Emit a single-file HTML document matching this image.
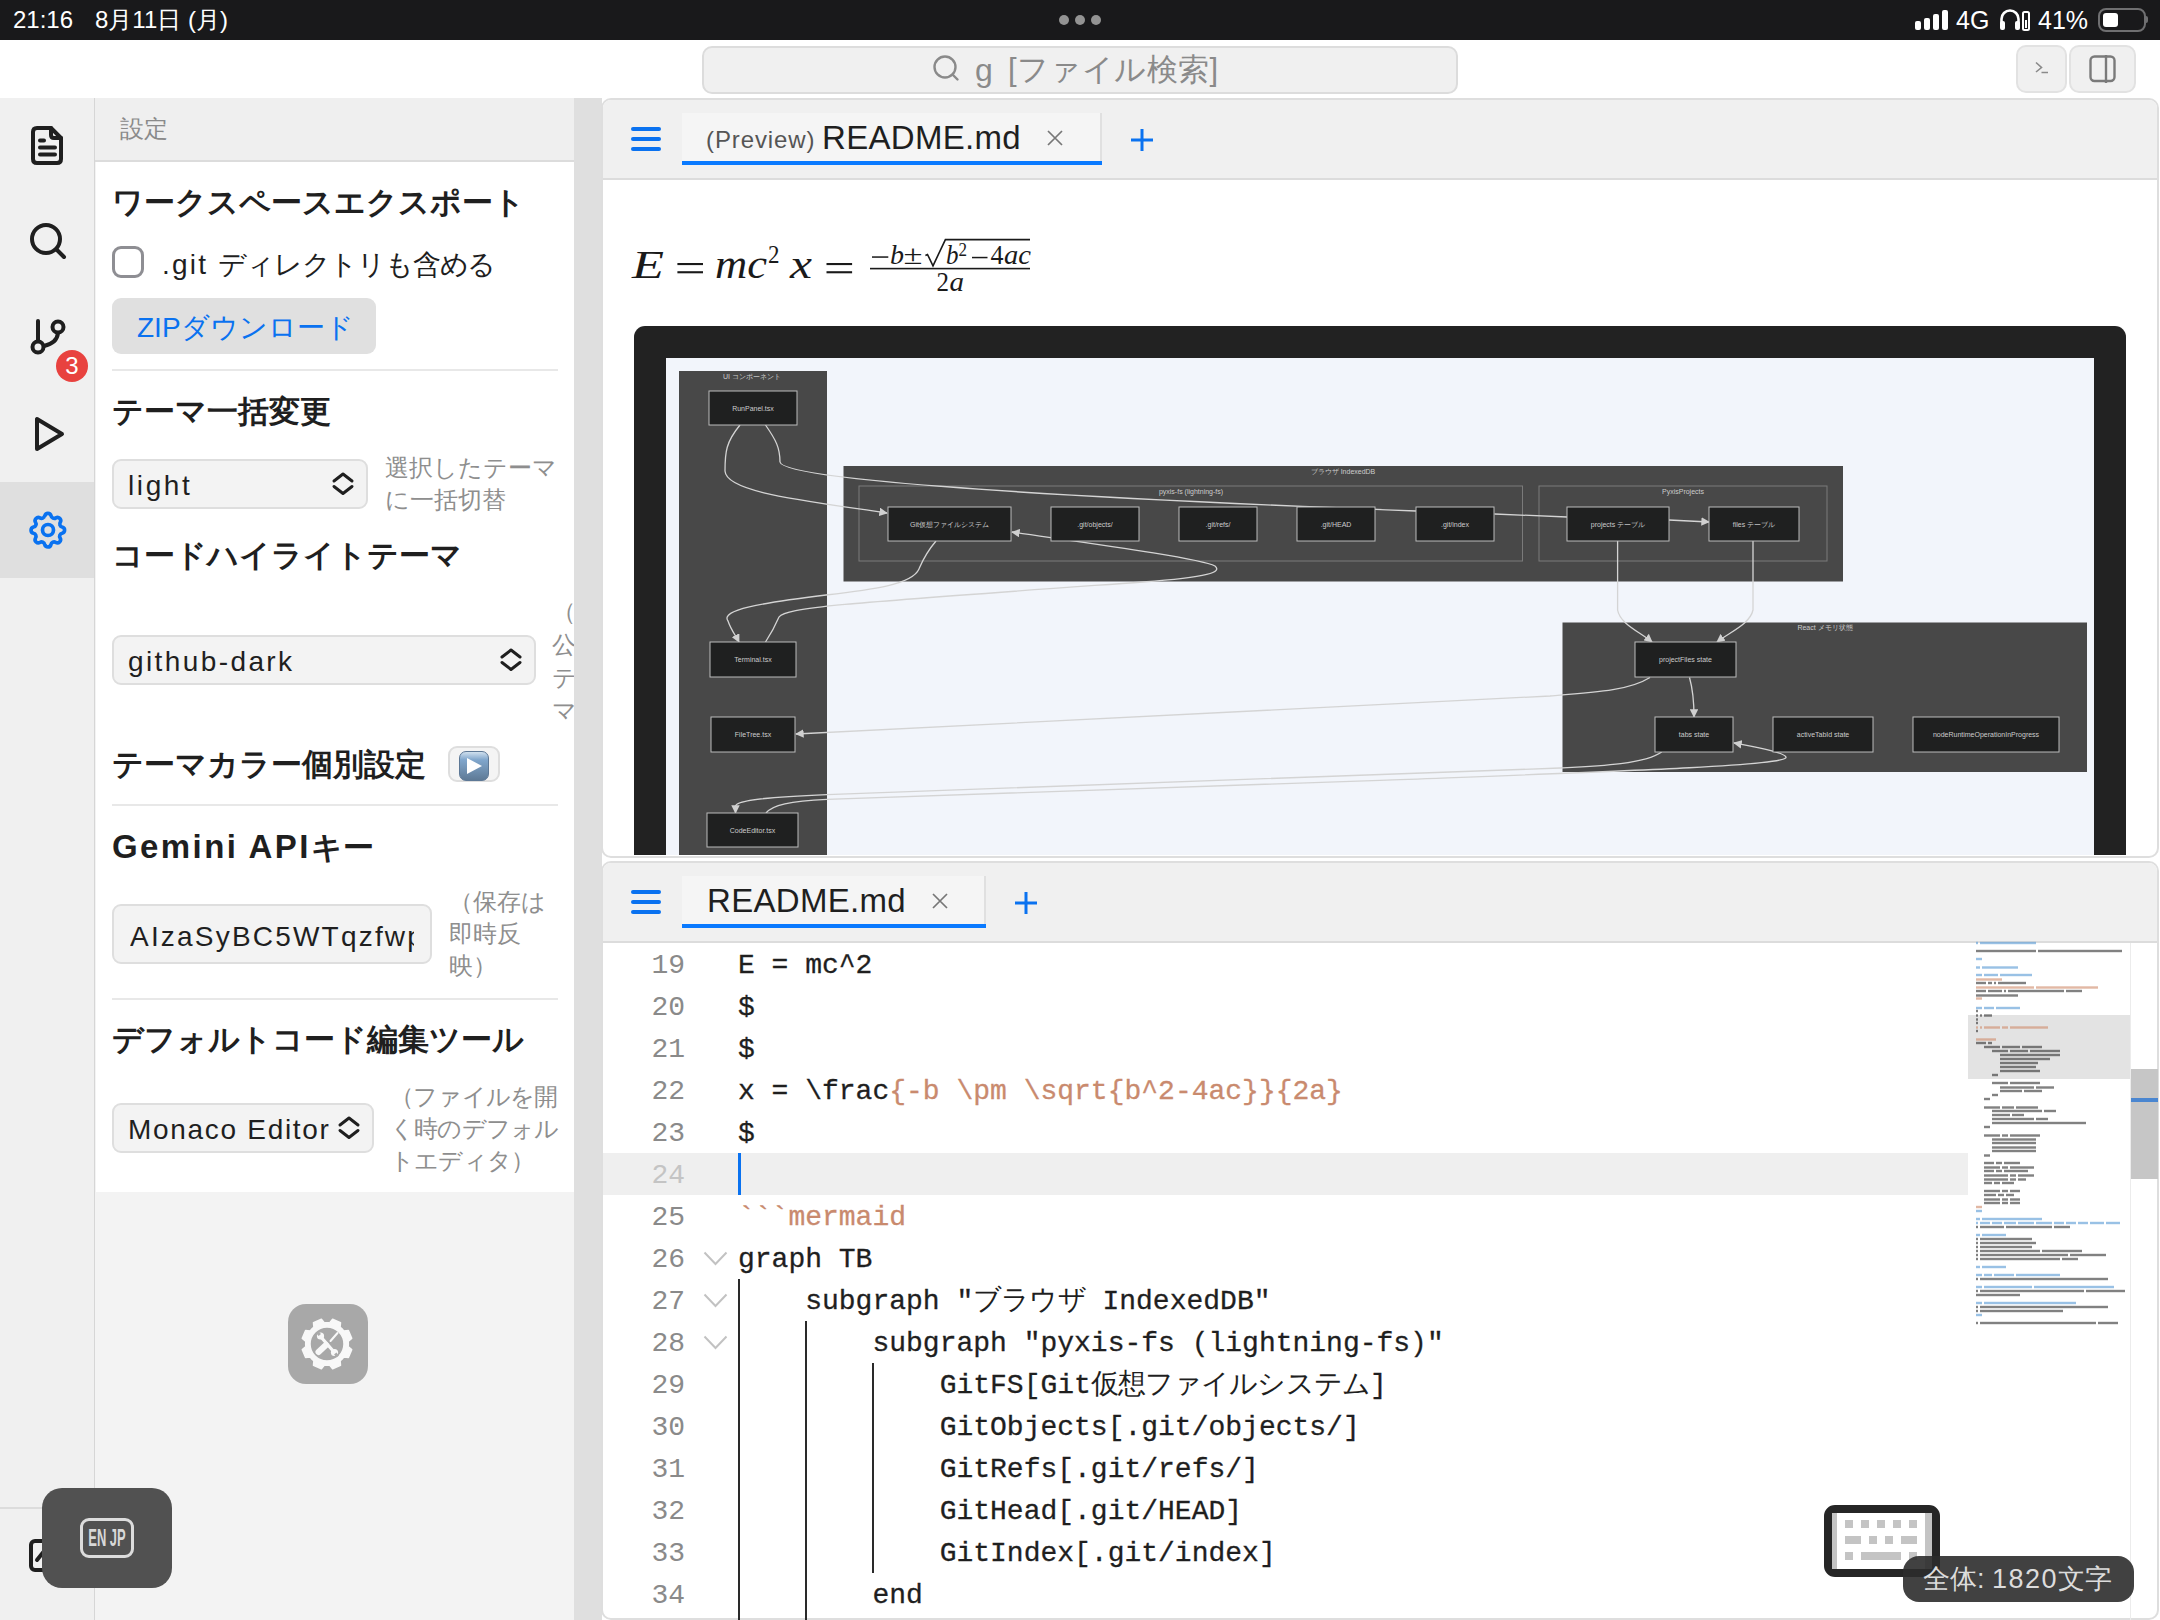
<!DOCTYPE html>
<html><head><meta charset="utf-8">
<style>
*{box-sizing:border-box;margin:0;padding:0}
html,body{width:2160px;height:1620px;overflow:hidden;background:#fff;font-family:"Liberation Sans",sans-serif;color:#1f1f1f}
.a{position:absolute}
#status{left:0;top:0;width:2160px;height:40px;background:#19191b;color:#fff}
#toolbar{left:0;top:40px;width:2160px;height:58px;background:#fff}
#act{left:0;top:98px;width:95px;height:1522px;background:#f0f0f0;border-right:1px solid #d6d6d6}
#side{left:95px;top:98px;width:479px;height:1522px;background:#f3f3f3}
#resz{left:574px;top:98px;width:28px;height:1522px;background:#dfdfdf}
.panel{left:601px;width:1558px;background:#fff;border:2px solid #dedede;border-radius:10px 10px 0 0;overflow:hidden}
.tabbar{left:0;top:0;width:100%;height:80px;background:#f0f0f0;border-bottom:2px solid #dcdcdc}
.ham{width:30px;height:4px;background:#0a72f0;border-radius:2px}
.h{font-weight:bold;font-size:31px;color:#1f1f1f;white-space:nowrap}
.sel{background:#f3f3f3;border:2px solid #dedede;border-radius:9px}
.gray{color:#8e8e8e;font-size:24px;line-height:32px;white-space:nowrap}
.hr{height:2px;background:#e8e8e8}
.mono{font-family:"Liberation Mono",monospace}
.ln{left:0;width:84px;text-align:right;color:#8a8a8a;font-size:28px;height:42px;line-height:42px}
.cl{left:738px;font-size:28px;height:42px;line-height:42px;white-space:pre;color:#1f1f1f;-webkit-text-stroke:0.3px currentColor}
.str{color:#c98a6e}
</style></head><body>
<!-- status bar -->
<div id="status" class="a">
  <div class="a" style="left:13px;top:4px;font-size:24px;line-height:32px;white-space:nowrap">21:16</div><div class="a" style="left:95px;top:4px;font-size:24px;line-height:32px;white-space:nowrap">8月11日 (月)</div>
  <div class="a" style="left:1059px;top:15px;width:10px;height:10px;border-radius:5px;background:#939393"></div>
  <div class="a" style="left:1075px;top:15px;width:10px;height:10px;border-radius:5px;background:#939393"></div>
  <div class="a" style="left:1091px;top:15px;width:10px;height:10px;border-radius:5px;background:#939393"></div>
  <div class="a" style="left:1914px;top:10px;width:40px;height:24px">
    <div class="a" style="left:1px;top:11px;width:6px;height:9px;background:#fff;border-radius:2px"></div>
    <div class="a" style="left:10px;top:8px;width:6px;height:12px;background:#fff;border-radius:2px"></div>
    <div class="a" style="left:19px;top:4px;width:6px;height:16px;background:#fff;border-radius:2px"></div>
    <div class="a" style="left:28px;top:0px;width:6px;height:20px;background:#fff;border-radius:2px"></div>
  </div>
  <div class="a" style="left:1956px;top:4px;font-size:25px;line-height:32px;white-space:nowrap">4G</div>
  <div class="a" style="left:2038px;top:4px;font-size:25px;line-height:32px;white-space:nowrap">41%</div>
  <div class="a" style="left:2098px;top:8px;width:48px;height:24px;border:2px solid #6f6f71;border-radius:8px">
    <div class="a" style="left:3px;top:3px;width:15px;height:14px;background:#fff;border-radius:3px"></div>
  </div>
</div>
<!-- toolbar -->
<div id="toolbar" class="a">
  <div class="a" style="left:702px;top:6px;width:756px;height:48px;background:#f0f0f0;border:2px solid #dcdcdc;border-radius:10px"></div>
  <div class="a" style="left:975px;top:8px;font-size:32px;line-height:44px;color:#8a8a8a;white-space:nowrap">g</div><div class="a" style="left:1008px;top:8px;font-size:31px;line-height:44px;color:#8a8a8a;white-space:nowrap;letter-spacing:0.4px">[ファイル検索]</div>
  <div class="a" style="left:2016px;top:5px;width:51px;height:48px;background:#f0f0f0;border:2px solid #e2e2e2;border-radius:10px"></div>
  <div class="a" style="left:2069px;top:5px;width:67px;height:48px;background:#f0f0f0;border:2px solid #e2e2e2;border-radius:10px"></div>
</div>
<!-- activity bar -->
<div id="act" class="a">
  <div class="a" style="left:0;top:384px;width:94px;height:96px;background:#dfdfdf"></div>
  <div class="a" style="left:0;top:1409px;width:94px;height:2px;background:#dcdcdc"></div>
</div>
<!-- sidebar -->
<div id="side" class="a">
  <div class="a" style="left:0;top:0;width:479px;height:64px;background:#efefef;border-bottom:2px solid #dcdcdc"></div>
  <div class="a" style="left:25px;top:14px;font-size:24px;line-height:34px;color:#8a8a8a">設定</div>
  <div class="a" style="left:1px;top:64px;width:478px;height:1030px;background:#fff"></div>
</div>


<!-- activity icons -->
<svg class="a" style="left:0;top:98px" width="95" height="500" viewBox="0 98 95 500" fill="none" stroke="#1f1f1f" stroke-width="4" stroke-linecap="round" stroke-linejoin="round">
  <path d="M37,128 H51 L61,138 V159 Q61,163 57,163 H37 Q33,163 33,159 V132 Q33,128 37,128 Z"/>
  <path d="M51,128 V135 Q51,138 54,138 H61"/>
  <path d="M40,140.5 H44 M40,147.5 H55 M40,154.5 H55"/>
  <circle cx="46" cy="239" r="14"/>
  <path d="M56.5,249.5 L64,257"/>
  <path d="M38,321 V341"/>
  <circle cx="38" cy="347" r="5.5"/>
  <circle cx="58" cy="327" r="5.5"/>
  <path d="M44,346 Q57,343 58,333"/>
  <path d="M37,419 V449 L62,434 Z"/>
</svg>
<div class="a" style="left:56px;top:350px;width:32px;height:32px;border-radius:16px;background:#e8423f;color:#fff;font-size:24px;line-height:32px;text-align:center">3</div>
<svg class="a" style="left:26px;top:508px" width="44" height="44" viewBox="0 0 24 24" fill="none" stroke="#0a72f0" stroke-width="2" stroke-linecap="round" stroke-linejoin="round">
  <path d="M10.3 4.3c.4-1.8 2.9-1.8 3.4 0a1.7 1.7 0 0 0 2.6 1.1c1.5-.9 3.3.8 2.4 2.4a1.7 1.7 0 0 0 1 2.6c1.8.4 1.8 2.900 0 3.400a1.7 1.7 0 0 0-1.1 2.6c.9 1.5-.8 3.300-2.400 2.400a1.7 1.7 0 0 0-2.600 1.100c-.4 1.800-2.900 1.800-3.400 0a1.7 1.7 0 0 0-2.600-1.100c-1.500.900-3.300-.800-2.400-2.400a1.7 1.7 0 0 0-1.100-2.600c-1.800-.400-1.800-2.900 0-3.400a1.7 1.7 0 0 0 1.100-2.600c-.900-1.500.800-3.300 2.400-2.400 1 .6 2.300.1 2.600-1.100z"/>
  <circle cx="12" cy="12" r="3"/>
</svg>
<!-- sidebar content -->
<div class="a h" style="left:112px;top:181px;line-height:44px">ワークスペースエクスポート</div>
<div class="a" style="left:112px;top:246px;width:31.5px;height:31.5px;border:3px solid #8e8e93;border-radius:9px;background:#fff"></div>
<div class="a" style="left:162px;top:245px;font-size:28px;line-height:40px;white-space:nowrap"><span style="letter-spacing:2.2px">.git </span><span style="letter-spacing:-1.2px">ディレクトリも含める</span></div>
<div class="a" style="left:112px;top:298px;width:264px;height:56px;background:#e0e0e0;border-radius:9px"></div>
<div class="a" style="left:137px;top:308px;font-size:28px;line-height:40px;color:#0a72f0;white-space:nowrap">ZIPダウンロード</div>
<div class="a hr" style="left:112px;top:369px;width:446px"></div>
<div class="a h" style="left:112px;top:390px;line-height:44px">テーマ一括変更</div>
<div class="a sel" style="left:112px;top:459px;width:256px;height:50px"></div>
<div class="a" style="left:128px;top:466px;font-size:28px;line-height:40px;white-space:nowrap;letter-spacing:2.6px">light</div>
<div class="a gray" style="left:385px;top:452px;width:180px">選択したテーマ<br>に一括切替</div>
<div class="a h" style="left:112px;top:534px;line-height:44px">コードハイライトテーマ</div>
<div class="a sel" style="left:112px;top:635px;width:424px;height:50px"></div>
<div class="a" style="left:128px;top:642px;font-size:28px;line-height:40px;white-space:nowrap;letter-spacing:2.4px">github-dark</div>
<div class="a gray" style="left:552px;top:595px;width:40px;line-height:33px">（<br>公<br>テ<br>マ</div>
<div class="a h" style="left:112px;top:743px;line-height:44px">テーマカラー個別設定</div>
<div class="a" style="left:448px;top:746px;width:52px;height:36px;background:#f4f4f4;border:2px solid #dedede;border-radius:9px"></div>
<div class="a" style="left:459px;top:751px;width:30px;height:30px;border-radius:7px;border:1px solid #5d7896;background:linear-gradient(#d0e0ee 0%,#80a6cc 28%,#7496b8 55%,#5e7a96 100%)"></div>
<div class="a" style="left:467px;top:758px;width:0;height:0;border-left:15px solid #fff;border-top:8px solid transparent;border-bottom:8px solid transparent"></div>
<div class="a hr" style="left:112px;top:804px;width:446px"></div>
<div class="a h" style="left:112px;top:825px;line-height:44px"><span style="letter-spacing:2.4px;font-size:33px">Gemini API</span>キー</div>
<div class="a sel" style="left:112px;top:904px;width:320px;height:60px;overflow:hidden">
  <div class="a" style="left:16px;top:11px;font-size:28px;line-height:40px;white-space:nowrap;width:284px;overflow:hidden;letter-spacing:2.2px">AIzaSyBC5WTqzfwpe</div>
</div>
<div class="a gray" style="left:449px;top:886px;width:110px">（保存は<br>即時反<br>映）</div>
<div class="a hr" style="left:112px;top:998px;width:446px"></div>
<div class="a h" style="left:112px;top:1018px;line-height:44px">デフォルトコード編集ツール</div>
<div class="a sel" style="left:112px;top:1103px;width:262px;height:50px"></div>
<div class="a" style="left:128px;top:1110px;font-size:28px;line-height:40px;white-space:nowrap;letter-spacing:1.7px">Monaco Editor</div>
<div class="a gray" style="left:390px;top:1081px;width:175px;letter-spacing:-0.8px">（ファイルを開<br>く時のデフォル<br>トエディタ）</div>
<div class="a" style="left:288px;top:1304px;width:80px;height:80px;background:#a8a8a8;border-radius:18px"></div>

<!-- selects chevrons -->
<svg class="a" style="left:0;top:0" width="600" height="1200" viewBox="0 0 600 1200" fill="none" stroke="#1f1f1f" stroke-width="3" stroke-linecap="round" stroke-linejoin="round">
  <path d="M334,481 L343,474 L352,481 M334,486.5 L343,493.5 L352,486.5"/>
  <path d="M502,657 L511,650 L520,657 M502,662.5 L511,669.5 L520,662.5"/>
  <path d="M340,1125 L349,1118 L358,1125 M340,1130.5 L349,1137.5 L358,1130.5"/>
</svg>
<!-- gear app icon -->
<svg class="a" style="left:0;top:1250px" width="600" height="200" viewBox="0 1250 600 200">
  <path fill="#f8f8f8" fill-rule="evenodd" stroke="#f8f8f8" stroke-width="1.5" stroke-linejoin="round" d="M348.1,1346.6 L351.7,1349.6 L348.4,1357.5 L343.8,1357.1 L343.0,1358.1 L342.1,1359.1 L341.1,1360.0 L340.1,1360.8 L340.5,1365.4 L332.6,1368.7 L329.6,1365.1 L328.3,1365.3 L327.0,1365.3 L325.7,1365.3 L324.4,1365.1 L321.4,1368.7 L313.5,1365.4 L313.9,1360.8 L312.9,1360.0 L311.9,1359.1 L311.0,1358.1 L310.2,1357.1 L305.6,1357.5 L302.3,1349.6 L305.9,1346.6 L305.7,1345.3 L305.7,1344.0 L305.7,1342.7 L305.9,1341.4 L302.3,1338.4 L305.6,1330.5 L310.2,1330.9 L311.0,1329.9 L311.9,1328.9 L312.9,1328.0 L313.9,1327.2 L313.5,1322.6 L321.4,1319.3 L324.4,1322.9 L325.7,1322.7 L327.0,1322.7 L328.3,1322.7 L329.6,1322.9 L332.6,1319.3 L340.5,1322.6 L340.1,1327.2 L341.1,1328.0 L342.1,1328.9 L343.0,1329.9 L343.8,1330.9 L348.4,1330.5 L351.7,1338.4 L348.1,1341.4 L348.3,1342.7 L348.3,1344.0 L348.3,1345.3 Z M344,1344 A17,17 0 1,0 310,1344 A17,17 0 1,0 344,1344 Z"/>
  <g stroke="#f8f8f8" stroke-linecap="round" fill="none">
    <path d="M337.5,1333 L330.5,1341" stroke-width="2"/>
    <path d="M326,1345 L318.5,1352" stroke-width="6"/>
    <path d="M321,1337 L334,1352" stroke-width="3.2"/>
  </g>
  <g fill="#f8f8f8"><circle cx="320.5" cy="1336" r="3.6"/><circle cx="334.5" cy="1352.5" r="3.6"/></g>
  <g fill="#ababab"><rect x="317" y="1331.5" width="3" height="4" transform="rotate(-40 318.5 1333.5)"/><rect x="335" y="1353" width="3" height="4" transform="rotate(-40 336.5 1355)"/></g>
</svg>
<!-- edit icon partly hidden -->
<svg class="a" style="left:20px;top:1530px" width="40" height="50" viewBox="20 1530 40 50" fill="none" stroke="#1f1f1f" stroke-width="4" stroke-linecap="round"><rect x="31" y="1541" width="26" height="29" rx="4"/><path d="M37,1560 L45,1550"/></svg>
<div class="a" style="left:42px;top:1488px;width:130px;height:100px;background:#515151;border-radius:20px"></div>
<div class="a" style="left:80px;top:1518px;width:54px;height:40px;border:3px solid #dcdcdc;border-radius:9px"></div><div class="a" style="left:57px;top:1520px;width:100px;height:36px;color:#d8d8d8;font-weight:bold;font-size:24px;line-height:36px;text-align:center;transform:scaleX(0.54);white-space:nowrap">EN JP</div>
<div id="resz" class="a"></div>
<!-- top panel -->
<div class="a panel" style="top:98px;height:760px;border-radius:10px">
  <div class="a tabbar"></div>
</div>
<!-- bottom panel -->
<div class="a panel" style="top:861px;height:759px;border-radius:10px">
  <div class="a tabbar"></div>
</div>


<!-- mermaid -->
<div class="a" style="left:603px;top:181px;width:1554px;height:674px;overflow:hidden">
<svg class="a" style="left:-603px;top:-181px" width="2160" height="1620" viewBox="0 0 2160 1620">
<defs><marker id="ar" viewBox="0 0 10 10" refX="9" refY="5" markerWidth="8.5" markerHeight="8.5" markerUnits="userSpaceOnUse" orient="auto"><path d="M0,0 L10,5 L0,10 z" fill="#d0d0d0"/></marker></defs>
<rect x="634" y="326" width="1492" height="700" rx="11" fill="#222222"/>
<rect x="666" y="358" width="1428" height="700" fill="#f2f5fb"/>
<g fill="#484848">
<rect x="679" y="371" width="148" height="600"/>
<rect x="843.5" y="466" width="999.5" height="115.5"/>
<rect x="1562.5" y="622.5" width="524.5" height="149.5"/>
</g>
<g fill="none" stroke="#7a7a7a" stroke-width="1"><rect x="859" y="486" width="663.5" height="75"/><rect x="1539" y="486" width="288" height="75"/></g>
<g fill="none" stroke="#d4d4d4" stroke-width="1.3">
<path d="M740,425 C726,442 725,452 725,471 C726,492 800,500 887,513" marker-end="url(#ar)"/>
<path d="M765.5,425 C776,440 780,448 780,462 C783,478 1000,495 1416,511 M1494.5,514 L1567,517"/>
<path d="M1669,520 L1709,522" marker-end="url(#ar)"/>
<path d="M936,541 C925,554 922,562 919,569 C912,585 870,590 826,595 C760,603 720,610 728,621 C731,630 736,636 739,642" marker-end="url(#ar)"/>
<path d="M765.5,642 C772,632 776,624 779,617 C786,607 850,603 1143,582 C1210,577 1222,572 1215,566 C1200,558 1080,542 1012,532" marker-end="url(#ar)"/>
<path d="M1617.6,541 V610 C1620,624 1640,632 1652,642" marker-end="url(#ar)"/>
<path d="M1753,541 V610 C1750,624 1730,632 1717,642" marker-end="url(#ar)"/>
<path d="M1650,677.5 C1630,690 1600,692 1550,696 L796,734" marker-end="url(#ar)"/>
<path d="M1689.5,677.5 C1693,690 1694,705 1694,717" marker-end="url(#ar)"/>
<path d="M1661.7,752 C1645,764 1600,766 1560,768 L827,794.6 C770,797 737,800 735.5,806 L735.5,813" marker-end="url(#ar)"/>
<path d="M766,813 C772,805 790,801 827,799.3 L1380,780.3 C1600,772 1790,766 1786,757 C1783,752 1760,748 1734,743" marker-end="url(#ar)"/>
</g>
<g font-family="Liberation Sans,sans-serif" font-size="7" fill="#cccccc" text-anchor="middle">
<text x="752" y="379">UI コンポーネント</text>
<text x="1343" y="474">ブラウザ IndexedDB</text>
<text x="1191" y="494">pyxis-fs (lightning-fs)</text>
<text x="1683" y="494">PyxisProjects</text>
<text x="1825" y="630">React メモリ状態</text>
<rect x="709" y="391" width="88" height="34" fill="#1f2020" stroke="#bbbbbb" stroke-width="1"/><text x="753.0" y="410.5">RunPanel.tsx</text>
<rect x="710" y="642" width="86" height="35" fill="#1f2020" stroke="#bbbbbb" stroke-width="1"/><text x="753.0" y="662.0">Terminal.tsx</text>
<rect x="711" y="717" width="84" height="35" fill="#1f2020" stroke="#bbbbbb" stroke-width="1"/><text x="753.0" y="737.0">FileTree.tsx</text>
<rect x="707" y="813" width="91" height="34" fill="#1f2020" stroke="#bbbbbb" stroke-width="1"/><text x="752.5" y="832.5">CodeEditor.tsx</text>
<rect x="888" y="507" width="123" height="34" fill="#1f2020" stroke="#bbbbbb" stroke-width="1"/><text x="949.5" y="526.5">Git仮想ファイルシステム</text>
<rect x="1051" y="507" width="88" height="34" fill="#1f2020" stroke="#bbbbbb" stroke-width="1"/><text x="1095.0" y="526.5">.git/objects/</text>
<rect x="1179" y="507" width="78" height="34" fill="#1f2020" stroke="#bbbbbb" stroke-width="1"/><text x="1218.0" y="526.5">.git/refs/</text>
<rect x="1297" y="507" width="78" height="34" fill="#1f2020" stroke="#bbbbbb" stroke-width="1"/><text x="1336.0" y="526.5">.git/HEAD</text>
<rect x="1416" y="507" width="78" height="34" fill="#1f2020" stroke="#bbbbbb" stroke-width="1"/><text x="1455.0" y="526.5">.git/index</text>
<rect x="1567" y="507" width="102" height="34" fill="#1f2020" stroke="#bbbbbb" stroke-width="1"/><text x="1618.0" y="526.5">projects テーブル</text>
<rect x="1709" y="507" width="90" height="34" fill="#1f2020" stroke="#bbbbbb" stroke-width="1"/><text x="1754.0" y="526.5">files テーブル</text>
<rect x="1635" y="642" width="101" height="35" fill="#1f2020" stroke="#bbbbbb" stroke-width="1"/><text x="1685.5" y="662.0">projectFiles state</text>
<rect x="1655" y="717" width="78" height="35" fill="#1f2020" stroke="#bbbbbb" stroke-width="1"/><text x="1694.0" y="737.0">tabs state</text>
<rect x="1773" y="717" width="100" height="35" fill="#1f2020" stroke="#bbbbbb" stroke-width="1"/><text x="1823.0" y="737.0">activeTabId state</text>
<rect x="1913" y="717" width="146" height="35" fill="#1f2020" stroke="#bbbbbb" stroke-width="1"/><text x="1986.0" y="737.0">nodeRuntimeOperationInProgress</text>
</g></svg></div>
<!-- math -->
<svg class="a" style="left:600px;top:220px" width="460" height="90" viewBox="600 220 460 90" font-family="Liberation Serif,serif" fill="#1a1a1a">
  <text x="632" y="278" font-size="41" font-style="italic" textLength="32" lengthAdjust="spacingAndGlyphs">E</text>
  <rect x="677.4" y="263" width="25.6" height="2.1"/><rect x="677.4" y="271.2" width="25.6" height="2.1"/>
  <text x="715" y="278" font-size="41" font-style="italic" textLength="52" lengthAdjust="spacingAndGlyphs">mc</text>
  <text x="768" y="263" font-size="25" textLength="11.5" lengthAdjust="spacingAndGlyphs">2</text>
  <text x="790" y="278" font-size="41" font-style="italic" textLength="22" lengthAdjust="spacingAndGlyphs">x</text>
  <rect x="826.5" y="263" width="25.6" height="2.1"/><rect x="826.5" y="271.2" width="25.6" height="2.1"/>
  <rect x="872" y="256.3" width="16.3" height="1.5"/>
  <text x="890" y="264.2" font-size="28" font-style="italic" textLength="14" lengthAdjust="spacingAndGlyphs">b</text>
  <text x="903.5" y="263.5" font-size="28" textLength="19" lengthAdjust="spacingAndGlyphs">±</text>
  <path d="M925.4,255.5 L927.5,254.5 L933,265.8 L945.4,239.6 H1030" fill="none" stroke="#1a1a1a" stroke-width="1.6" stroke-linejoin="miter"/>
  <text x="946" y="264.2" font-size="28" font-style="italic" textLength="12.5" lengthAdjust="spacingAndGlyphs">b</text>
  <text x="958.5" y="256" font-size="18" textLength="8.5" lengthAdjust="spacingAndGlyphs">2</text>
  <rect x="972" y="256.8" width="15.5" height="1.5"/>
  <text x="990.5" y="264.2" font-size="28" textLength="13" lengthAdjust="spacingAndGlyphs">4</text>
  <text x="1004" y="264.2" font-size="28" font-style="italic" textLength="27" lengthAdjust="spacingAndGlyphs">ac</text>
  <rect x="870" y="267.8" width="160" height="1.6"/>
  <text x="936.5" y="291.3" font-size="28" textLength="12.5" lengthAdjust="spacingAndGlyphs">2</text>
  <text x="949.5" y="291.3" font-size="28" font-style="italic" textLength="14.5" lengthAdjust="spacingAndGlyphs">a</text>
</svg>
<!-- editor -->
<div class="a" style="left:603px;top:1153px;width:1365px;height:42px;background:#efefef"></div>
<div class="a" style="left:738px;top:1153px;width:3px;height:42px;background:#0a72f0"></div>
<div class="a mono ln" style="left:601px;top:945px;color:#8a8a8a">19</div>
<div class="a mono cl" style="top:945px">E = mc^2</div>
<div class="a mono ln" style="left:601px;top:987px;color:#8a8a8a">20</div>
<div class="a mono cl" style="top:987px">$</div>
<div class="a mono ln" style="left:601px;top:1029px;color:#8a8a8a">21</div>
<div class="a mono cl" style="top:1029px">$</div>
<div class="a mono ln" style="left:601px;top:1071px;color:#8a8a8a">22</div>
<div class="a mono cl" style="top:1071px">x = \frac<span class="str">{-b \pm \sqrt{b^2-4ac}}{2a}</span></div>
<div class="a mono ln" style="left:601px;top:1113px;color:#8a8a8a">23</div>
<div class="a mono cl" style="top:1113px">$</div>
<div class="a mono ln" style="left:601px;top:1155px;color:#c4c4c4">24</div>
<div class="a mono ln" style="left:601px;top:1197px;color:#8a8a8a">25</div>
<div class="a mono cl" style="top:1197px"><span class="str">```mermaid</span></div>
<div class="a mono ln" style="left:601px;top:1239px;color:#8a8a8a">26</div>
<div class="a mono cl" style="top:1239px">graph TB</div>
<svg class="a" style="left:702px;top:1250px" width="28" height="18" viewBox="0 0 28 18" fill="none" stroke="#c2c2c2" stroke-width="2"><path d="M2.5,2.5 L13.5,14 L24.5,2.5"/></svg>
<div class="a mono ln" style="left:601px;top:1281px;color:#8a8a8a">27</div>
<div class="a mono cl" style="top:1281px">    subgraph "<span style="letter-spacing:-0.9px;-webkit-text-stroke:0">ブラウザ</span> IndexedDB"</div>
<svg class="a" style="left:702px;top:1292px" width="28" height="18" viewBox="0 0 28 18" fill="none" stroke="#c2c2c2" stroke-width="2"><path d="M2.5,2.5 L13.5,14 L24.5,2.5"/></svg>
<div class="a mono ln" style="left:601px;top:1323px;color:#8a8a8a">28</div>
<div class="a mono cl" style="top:1323px">        subgraph "pyxis-fs (lightning-fs)"</div>
<svg class="a" style="left:702px;top:1334px" width="28" height="18" viewBox="0 0 28 18" fill="none" stroke="#c2c2c2" stroke-width="2"><path d="M2.5,2.5 L13.5,14 L24.5,2.5"/></svg>
<div class="a mono ln" style="left:601px;top:1365px;color:#8a8a8a">29</div>
<div class="a mono cl" style="top:1365px">            GitFS[Git<span style="letter-spacing:-0.9px;-webkit-text-stroke:0">仮想ファイルシステム</span>]</div>
<div class="a mono ln" style="left:601px;top:1407px;color:#8a8a8a">30</div>
<div class="a mono cl" style="top:1407px">            GitObjects[.git/objects/]</div>
<div class="a mono ln" style="left:601px;top:1449px;color:#8a8a8a">31</div>
<div class="a mono cl" style="top:1449px">            GitRefs[.git/refs/]</div>
<div class="a mono ln" style="left:601px;top:1491px;color:#8a8a8a">32</div>
<div class="a mono cl" style="top:1491px">            GitHead[.git/HEAD]</div>
<div class="a mono ln" style="left:601px;top:1533px;color:#8a8a8a">33</div>
<div class="a mono cl" style="top:1533px">            GitIndex[.git/index]</div>
<div class="a mono ln" style="left:601px;top:1575px;color:#8a8a8a">34</div>
<div class="a mono cl" style="top:1575px">        end</div>
<div class="a mono ln" style="left:601px;top:1617px;color:#8a8a8a">35</div>
<div class="a" style="left:738px;top:1279px;width:2px;height:341px;background:#2a2a2a"></div>
<div class="a" style="left:805px;top:1321px;width:2px;height:299px;background:#2a2a2a"></div>
<div class="a" style="left:872px;top:1363px;width:2px;height:210px;background:#2a2a2a"></div>
<!-- minimap -->
<div class="a" style="left:1968px;top:1015px;width:162px;height:64px;background:#e3e3e3"></div>
<div class="a" style="left:2130px;top:943px;width:1px;height:677px;background:#ececec"></div>
<div class="a" style="left:2131px;top:1069px;width:27px;height:110px;background:#c6c6c6"></div>
<div class="a" style="left:2131px;top:1098px;width:27px;height:4px;background:#4a86d0"></div>
<svg class="a" style="left:1960px;top:940px" width="200" height="400" viewBox="1960 940 200 400">
<rect x="1976" y="941.8" width="2" height="2.4" fill="#5b9bd5" opacity="0.62"/>
<rect x="1980" y="941.8" width="56" height="2.4" fill="#5b9bd5" opacity="0.62"/>
<rect x="1976" y="949.8" width="60" height="2.4" fill="#333" opacity="0.62"/>
<rect x="2038" y="949.8" width="84" height="2.4" fill="#333" opacity="0.62"/>
<rect x="1976" y="957.8" width="6" height="2.4" fill="#5b9bd5" opacity="0.62"/>
<rect x="1976" y="966.3" width="4" height="2.4" fill="#5b9bd5" opacity="0.62"/>
<rect x="1982" y="966.3" width="36" height="2.4" fill="#5b9bd5" opacity="0.62"/>
<rect x="1976" y="973.8" width="6" height="2.4" fill="#5b9bd5" opacity="0.62"/>
<rect x="1984" y="973.8" width="14" height="2.4" fill="#5b9bd5" opacity="0.62"/>
<rect x="2000" y="973.8" width="32" height="2.4" fill="#5b9bd5" opacity="0.62"/>
<rect x="1976" y="978.3" width="26" height="2.4" fill="#d08c6c" opacity="0.62"/>
<rect x="1976" y="981.8" width="10" height="2.4" fill="#333" opacity="0.62"/>
<rect x="1988" y="981.8" width="4" height="2.4" fill="#333" opacity="0.62"/>
<rect x="1994" y="981.8" width="2" height="2.4" fill="#333" opacity="0.62"/>
<rect x="1998" y="981.8" width="28" height="2.4" fill="#333" opacity="0.62"/>
<rect x="1976" y="986.3" width="58" height="2.4" fill="#d08c6c" opacity="0.62"/>
<rect x="2036" y="986.3" width="62" height="2.4" fill="#d08c6c" opacity="0.62"/>
<rect x="1976" y="989.8" width="10" height="2.4" fill="#333" opacity="0.62"/>
<rect x="1988" y="989.8" width="14" height="2.4" fill="#333" opacity="0.62"/>
<rect x="2004" y="989.8" width="2" height="2.4" fill="#333" opacity="0.62"/>
<rect x="2008" y="989.8" width="56" height="2.4" fill="#333" opacity="0.62"/>
<rect x="2066" y="989.8" width="16" height="2.4" fill="#333" opacity="0.62"/>
<rect x="1976" y="994.3" width="42" height="2.4" fill="#333" opacity="0.62"/>
<rect x="1976" y="997.3" width="6" height="2.4" fill="#d08c6c" opacity="0.62"/>
<rect x="1976" y="1006.8" width="6" height="2.4" fill="#5b9bd5" opacity="0.62"/>
<rect x="1984" y="1006.8" width="10" height="2.4" fill="#5b9bd5" opacity="0.62"/>
<rect x="1996" y="1006.8" width="24" height="2.4" fill="#5b9bd5" opacity="0.62"/>
<rect x="1976" y="1009.8" width="2" height="2.4" fill="#333" opacity="0.62"/>
<rect x="1976" y="1014.3" width="2" height="2.4" fill="#333" opacity="0.62"/>
<rect x="1980" y="1014.3" width="2" height="2.4" fill="#333" opacity="0.62"/>
<rect x="1984" y="1014.3" width="8" height="2.4" fill="#333" opacity="0.62"/>
<rect x="1976" y="1018.3" width="2" height="2.4" fill="#333" opacity="0.62"/>
<rect x="1976" y="1021.8" width="2" height="2.4" fill="#333" opacity="0.62"/>
<rect x="1976" y="1026.3" width="2" height="2.4" fill="#d08c6c" opacity="0.62"/>
<rect x="1980" y="1026.3" width="2" height="2.4" fill="#d08c6c" opacity="0.62"/>
<rect x="1984" y="1026.3" width="16" height="2.4" fill="#d08c6c" opacity="0.62"/>
<rect x="2002" y="1026.3" width="6" height="2.4" fill="#d08c6c" opacity="0.62"/>
<rect x="2010" y="1026.3" width="38" height="2.4" fill="#d08c6c" opacity="0.62"/>
<rect x="1976" y="1029.8" width="2" height="2.4" fill="#333" opacity="0.62"/>
<rect x="1976" y="1038.3" width="20" height="2.4" fill="#d08c6c" opacity="0.62"/>
<rect x="1976" y="1041.8" width="10" height="2.4" fill="#333" opacity="0.62"/>
<rect x="1988" y="1041.8" width="4" height="2.4" fill="#333" opacity="0.62"/>
<rect x="1984" y="1045.8" width="16" height="2.4" fill="#333" opacity="0.62"/>
<rect x="2002" y="1045.8" width="18" height="2.4" fill="#333" opacity="0.62"/>
<rect x="2022" y="1045.8" width="20" height="2.4" fill="#333" opacity="0.62"/>
<rect x="1992" y="1049.8" width="16" height="2.4" fill="#333" opacity="0.62"/>
<rect x="2010" y="1049.8" width="18" height="2.4" fill="#333" opacity="0.62"/>
<rect x="2030" y="1049.8" width="30" height="2.4" fill="#333" opacity="0.62"/>
<rect x="2000" y="1053.8" width="60" height="2.4" fill="#333" opacity="0.62"/>
<rect x="2000" y="1057.8" width="50" height="2.4" fill="#333" opacity="0.62"/>
<rect x="2000" y="1061.8" width="38" height="2.4" fill="#333" opacity="0.62"/>
<rect x="2000" y="1065.8" width="36" height="2.4" fill="#333" opacity="0.62"/>
<rect x="2000" y="1069.8" width="40" height="2.4" fill="#333" opacity="0.62"/>
<rect x="1992" y="1073.8" width="6" height="2.4" fill="#333" opacity="0.62"/>
<rect x="1992" y="1081.8" width="16" height="2.4" fill="#333" opacity="0.62"/>
<rect x="2010" y="1081.8" width="30" height="2.4" fill="#333" opacity="0.62"/>
<rect x="2000" y="1086.3" width="34" height="2.4" fill="#333" opacity="0.62"/>
<rect x="2036" y="1086.3" width="18" height="2.4" fill="#333" opacity="0.62"/>
<rect x="2000" y="1089.8" width="22" height="2.4" fill="#333" opacity="0.62"/>
<rect x="2024" y="1089.8" width="18" height="2.4" fill="#333" opacity="0.62"/>
<rect x="1992" y="1093.8" width="6" height="2.4" fill="#333" opacity="0.62"/>
<rect x="1984" y="1097.8" width="6" height="2.4" fill="#333" opacity="0.62"/>
<rect x="1984" y="1106.3" width="16" height="2.4" fill="#333" opacity="0.62"/>
<rect x="2002" y="1106.3" width="12" height="2.4" fill="#333" opacity="0.62"/>
<rect x="2016" y="1106.3" width="22" height="2.4" fill="#333" opacity="0.62"/>
<rect x="1992" y="1109.8" width="50" height="2.4" fill="#333" opacity="0.62"/>
<rect x="2044" y="1109.8" width="12" height="2.4" fill="#333" opacity="0.62"/>
<rect x="1992" y="1113.8" width="18" height="2.4" fill="#333" opacity="0.62"/>
<rect x="2012" y="1113.8" width="12" height="2.4" fill="#333" opacity="0.62"/>
<rect x="1992" y="1117.8" width="42" height="2.4" fill="#333" opacity="0.62"/>
<rect x="2036" y="1117.8" width="12" height="2.4" fill="#333" opacity="0.62"/>
<rect x="1992" y="1121.8" width="94" height="2.4" fill="#333" opacity="0.62"/>
<rect x="1984" y="1125.8" width="6" height="2.4" fill="#333" opacity="0.62"/>
<rect x="1984" y="1134.3" width="16" height="2.4" fill="#333" opacity="0.62"/>
<rect x="2002" y="1134.3" width="6" height="2.4" fill="#333" opacity="0.62"/>
<rect x="2010" y="1134.3" width="30" height="2.4" fill="#333" opacity="0.62"/>
<rect x="1992" y="1138.3" width="44" height="2.4" fill="#333" opacity="0.62"/>
<rect x="1992" y="1141.8" width="44" height="2.4" fill="#333" opacity="0.62"/>
<rect x="1992" y="1146.3" width="44" height="2.4" fill="#333" opacity="0.62"/>
<rect x="1992" y="1149.8" width="44" height="2.4" fill="#333" opacity="0.62"/>
<rect x="1984" y="1154.3" width="6" height="2.4" fill="#333" opacity="0.62"/>
<rect x="1984" y="1161.8" width="10" height="2.4" fill="#333" opacity="0.62"/>
<rect x="1996" y="1161.8" width="6" height="2.4" fill="#333" opacity="0.62"/>
<rect x="2004" y="1161.8" width="16" height="2.4" fill="#333" opacity="0.62"/>
<rect x="1984" y="1166.3" width="16" height="2.4" fill="#333" opacity="0.62"/>
<rect x="2002" y="1166.3" width="6" height="2.4" fill="#333" opacity="0.62"/>
<rect x="2010" y="1166.3" width="24" height="2.4" fill="#333" opacity="0.62"/>
<rect x="1984" y="1169.8" width="10" height="2.4" fill="#333" opacity="0.62"/>
<rect x="1996" y="1169.8" width="6" height="2.4" fill="#333" opacity="0.62"/>
<rect x="2004" y="1169.8" width="24" height="2.4" fill="#333" opacity="0.62"/>
<rect x="1984" y="1174.3" width="24" height="2.4" fill="#333" opacity="0.62"/>
<rect x="2010" y="1174.3" width="6" height="2.4" fill="#333" opacity="0.62"/>
<rect x="2018" y="1174.3" width="16" height="2.4" fill="#333" opacity="0.62"/>
<rect x="1984" y="1178.3" width="24" height="2.4" fill="#333" opacity="0.62"/>
<rect x="2010" y="1178.3" width="6" height="2.4" fill="#333" opacity="0.62"/>
<rect x="2018" y="1178.3" width="8" height="2.4" fill="#333" opacity="0.62"/>
<rect x="1984" y="1181.8" width="8" height="2.4" fill="#333" opacity="0.62"/>
<rect x="1994" y="1181.8" width="6" height="2.4" fill="#333" opacity="0.62"/>
<rect x="2002" y="1181.8" width="12" height="2.4" fill="#333" opacity="0.62"/>
<rect x="1984" y="1189.8" width="16" height="2.4" fill="#333" opacity="0.62"/>
<rect x="2002" y="1189.8" width="6" height="2.4" fill="#333" opacity="0.62"/>
<rect x="2010" y="1189.8" width="10" height="2.4" fill="#333" opacity="0.62"/>
<rect x="1984" y="1193.8" width="12" height="2.4" fill="#333" opacity="0.62"/>
<rect x="1998" y="1193.8" width="6" height="2.4" fill="#333" opacity="0.62"/>
<rect x="2006" y="1193.8" width="8" height="2.4" fill="#333" opacity="0.62"/>
<rect x="1984" y="1198.3" width="16" height="2.4" fill="#333" opacity="0.62"/>
<rect x="2002" y="1198.3" width="6" height="2.4" fill="#333" opacity="0.62"/>
<rect x="2010" y="1198.3" width="10" height="2.4" fill="#333" opacity="0.62"/>
<rect x="1984" y="1201.8" width="16" height="2.4" fill="#333" opacity="0.62"/>
<rect x="2002" y="1201.8" width="6" height="2.4" fill="#333" opacity="0.62"/>
<rect x="2010" y="1201.8" width="10" height="2.4" fill="#333" opacity="0.62"/>
<rect x="1976" y="1205.8" width="6" height="2.4" fill="#d08c6c" opacity="0.62"/>
<rect x="1976" y="1209.8" width="6" height="2.4" fill="#5b9bd5" opacity="0.62"/>
<rect x="1976" y="1217.8" width="4" height="2.4" fill="#5b9bd5" opacity="0.62"/>
<rect x="1982" y="1217.8" width="60" height="2.4" fill="#5b9bd5" opacity="0.62"/>
<rect x="1976" y="1221.8" width="2" height="2.4" fill="#5b9bd5" opacity="0.62"/>
<rect x="1980" y="1221.8" width="10" height="2.4" fill="#5b9bd5" opacity="0.62"/>
<rect x="1992" y="1221.8" width="10" height="2.4" fill="#5b9bd5" opacity="0.62"/>
<rect x="2004" y="1221.8" width="12" height="2.4" fill="#5b9bd5" opacity="0.62"/>
<rect x="2018" y="1221.8" width="16" height="2.4" fill="#5b9bd5" opacity="0.62"/>
<rect x="2036" y="1221.8" width="16" height="2.4" fill="#5b9bd5" opacity="0.62"/>
<rect x="2054" y="1221.8" width="10" height="2.4" fill="#5b9bd5" opacity="0.62"/>
<rect x="2066" y="1221.8" width="10" height="2.4" fill="#5b9bd5" opacity="0.62"/>
<rect x="2078" y="1221.8" width="10" height="2.4" fill="#5b9bd5" opacity="0.62"/>
<rect x="2090" y="1221.8" width="14" height="2.4" fill="#5b9bd5" opacity="0.62"/>
<rect x="2106" y="1221.8" width="14" height="2.4" fill="#5b9bd5" opacity="0.62"/>
<rect x="1976" y="1225.8" width="2" height="2.4" fill="#333" opacity="0.62"/>
<rect x="1980" y="1225.8" width="24" height="2.4" fill="#333" opacity="0.62"/>
<rect x="2006" y="1225.8" width="46" height="2.4" fill="#333" opacity="0.62"/>
<rect x="2054" y="1225.8" width="16" height="2.4" fill="#333" opacity="0.62"/>
<rect x="1976" y="1233.8" width="4" height="2.4" fill="#5b9bd5" opacity="0.62"/>
<rect x="1982" y="1233.8" width="24" height="2.4" fill="#5b9bd5" opacity="0.62"/>
<rect x="1976" y="1237.8" width="2" height="2.4" fill="#333" opacity="0.62"/>
<rect x="1980" y="1237.8" width="52" height="2.4" fill="#333" opacity="0.62"/>
<rect x="1976" y="1241.8" width="2" height="2.4" fill="#333" opacity="0.62"/>
<rect x="1980" y="1241.8" width="56" height="2.4" fill="#333" opacity="0.62"/>
<rect x="1976" y="1245.8" width="2" height="2.4" fill="#333" opacity="0.62"/>
<rect x="1980" y="1245.8" width="52" height="2.4" fill="#333" opacity="0.62"/>
<rect x="1976" y="1249.8" width="2" height="2.4" fill="#333" opacity="0.62"/>
<rect x="1980" y="1249.8" width="60" height="2.4" fill="#333" opacity="0.62"/>
<rect x="2042" y="1249.8" width="40" height="2.4" fill="#333" opacity="0.62"/>
<rect x="1976" y="1253.8" width="2" height="2.4" fill="#333" opacity="0.62"/>
<rect x="1980" y="1253.8" width="88" height="2.4" fill="#333" opacity="0.62"/>
<rect x="2070" y="1253.8" width="36" height="2.4" fill="#333" opacity="0.62"/>
<rect x="1976" y="1257.8" width="2" height="2.4" fill="#333" opacity="0.62"/>
<rect x="1980" y="1257.8" width="80" height="2.4" fill="#333" opacity="0.62"/>
<rect x="2062" y="1257.8" width="16" height="2.4" fill="#333" opacity="0.62"/>
<rect x="1976" y="1265.8" width="4" height="2.4" fill="#5b9bd5" opacity="0.62"/>
<rect x="1982" y="1265.8" width="24" height="2.4" fill="#5b9bd5" opacity="0.62"/>
<rect x="1976" y="1273.8" width="6" height="2.4" fill="#5b9bd5" opacity="0.62"/>
<rect x="1984" y="1273.8" width="8" height="2.4" fill="#5b9bd5" opacity="0.62"/>
<rect x="1994" y="1273.8" width="20" height="2.4" fill="#5b9bd5" opacity="0.62"/>
<rect x="2016" y="1273.8" width="44" height="2.4" fill="#5b9bd5" opacity="0.62"/>
<rect x="1976" y="1277.8" width="2" height="2.4" fill="#333" opacity="0.62"/>
<rect x="1980" y="1277.8" width="128" height="2.4" fill="#333" opacity="0.62"/>
<rect x="1976" y="1285.8" width="6" height="2.4" fill="#5b9bd5" opacity="0.62"/>
<rect x="1984" y="1285.8" width="48" height="2.4" fill="#5b9bd5" opacity="0.62"/>
<rect x="2034" y="1285.8" width="80" height="2.4" fill="#5b9bd5" opacity="0.62"/>
<rect x="1976" y="1289.8" width="2.0" height="2.4" fill="#333" opacity="0.62"/>
<rect x="1980" y="1289.8" width="104.0" height="2.4" fill="#333" opacity="0.62"/>
<rect x="2086" y="1289.8" width="39.0" height="2.4" fill="#333" opacity="0.62"/>
<rect x="1976" y="1293.8" width="44.0" height="2.4" fill="#333" opacity="0.62"/>

<rect x="1976" y="1301.8" width="6" height="2.4" fill="#5b9bd5" opacity="0.62"/>
<rect x="1984" y="1301.8" width="92" height="2.4" fill="#5b9bd5" opacity="0.62"/>
<rect x="1976" y="1305.8" width="2.0" height="2.4" fill="#333" opacity="0.62"/>
<rect x="1980" y="1305.8" width="128.0" height="2.4" fill="#333" opacity="0.62"/>
<rect x="1976" y="1309.8" width="2.0" height="2.4" fill="#333" opacity="0.62"/>
<rect x="1980" y="1309.8" width="83.0" height="2.4" fill="#333" opacity="0.62"/>
<rect x="1976" y="1313.8" width="6" height="2.4" fill="#5b9bd5" opacity="0.62"/>
<rect x="1976" y="1321.8" width="2" height="2.4" fill="#333" opacity="0.62"/>
<rect x="1980" y="1321.8" width="116" height="2.4" fill="#333" opacity="0.62"/>
<rect x="2098" y="1321.8" width="20" height="2.4" fill="#333" opacity="0.62"/>
</svg>
<!-- keyboard & count -->
<div class="a" style="left:1824px;top:1505px;width:116px;height:72px;border:8px solid #262626;border-radius:11px;background:#fff"></div>
<div class="a" style="left:1832px;top:1513px;width:5px;height:56px;background:#c4c4c4"></div>
<div class="a" style="left:1925px;top:1513px;width:7px;height:56px;background:#c4c4c4"></div>
<svg class="a" style="left:1840px;top:1515px" width="90" height="50" viewBox="0 0 90 50" fill="#c4c4c4">
  <rect x="5" y="5" width="8" height="8"/><rect x="21" y="5" width="8" height="8"/><rect x="37" y="5" width="8" height="8"/><rect x="53" y="5" width="8" height="8"/><rect x="69" y="5" width="8" height="8"/>
  <rect x="5" y="21" width="16" height="8"/><rect x="29" y="21" width="8" height="8"/><rect x="45" y="21" width="8" height="8"/><rect x="61" y="21" width="16" height="8"/>
  <rect x="5" y="37" width="8" height="8"/><rect x="21" y="37" width="40" height="8"/><rect x="69" y="37" width="8" height="8"/>
</svg>
<div class="a" style="left:1903px;top:1556px;width:231px;height:46px;background:rgba(44,44,44,0.9);border-radius:16px"></div>
<div class="a" style="left:1923px;top:1558px;font-size:27px;line-height:42px;color:#dcdcdc;white-space:nowrap">全体: <span style="letter-spacing:1.5px">1820</span>文字</div>
<!-- status extras -->
<svg class="a" style="left:1998px;top:8px" width="36" height="26" viewBox="0 0 36 26" fill="none" stroke="#fff" stroke-width="2.6">
  <path d="M3.5,19 V11 A8.5,8.5 0 0 1 20.5,11 V19"/>
  <rect x="2" y="13" width="5" height="9" rx="2" fill="#fff" stroke="none"/><rect x="17" y="13" width="5" height="9" rx="2" fill="#fff" stroke="none"/>
  <rect x="25" y="4" width="6" height="18" rx="1.5" stroke-width="2"/>
  <rect x="27" y="12" width="2" height="8" fill="#fff" stroke="none"/>
</svg>
<div class="a" style="left:2145px;top:16px;width:3px;height:7px;background:#6f6f71;border-radius:0 2px 2px 0"></div>

<!-- toolbar icons -->
<svg class="a" style="left:930px;top:52px" width="32" height="32" viewBox="0 0 32 32" fill="none" stroke="#8a8a8a" stroke-width="2.4" stroke-linecap="round"><circle cx="15" cy="15" r="10.5"/><path d="M22.5,22.5 L27.5,27.5"/></svg>
<svg class="a" style="left:2030px;top:58px" width="24" height="20" viewBox="0 0 24 20" fill="none" stroke="#8a8a8a" stroke-width="1.6"><path d="M6,4.5 L11.5,9.5 L6,14 M11.5,14.5 H18"/></svg>
<svg class="a" style="left:2086px;top:52px" width="32" height="32" viewBox="0 0 32 32" fill="none" stroke="#7a7a7a" stroke-width="2.4" stroke-linejoin="round"><rect x="4.5" y="4.5" width="24" height="24.5" rx="4"/><path d="M20,3 V31"/></svg>
<!-- top tabbar -->
<div class="a ham" style="left:631px;top:127px"></div><div class="a ham" style="left:631px;top:137px"></div><div class="a ham" style="left:631px;top:147px"></div>
<div class="a" style="left:682px;top:113px;width:420px;height:52px;background:#f5f5f5;border-right:2px solid #e0e0e0"></div>
<div class="a" style="left:682px;top:161px;width:420px;height:4px;background:#0a7aff"></div>
<div class="a" style="left:706px;top:122px;font-size:24px;line-height:36px;color:#555;white-space:nowrap;letter-spacing:0.9px">(Preview)</div>
<div class="a" style="left:822px;top:116px;font-size:33px;line-height:44px;color:#1f1f1f;white-space:nowrap;letter-spacing:0.3px">README.md</div>
<svg class="a" style="left:1045px;top:128px" width="20" height="20" viewBox="0 0 20 20" stroke="#777" stroke-width="1.7"><path d="M3,3 L17,17 M17,3 L3,17"/></svg>
<svg class="a" style="left:1129px;top:127px" width="26" height="26" viewBox="0 0 26 26" stroke="#0a72f0" stroke-width="3"><path d="M13,2 V24 M2,13 H24"/></svg>
<!-- bottom tabbar -->
<div class="a ham" style="left:631px;top:890px"></div><div class="a ham" style="left:631px;top:900px"></div><div class="a ham" style="left:631px;top:910px"></div>
<div class="a" style="left:682px;top:876px;width:304px;height:52px;background:#f5f5f5;border-right:2px solid #e0e0e0"></div>
<div class="a" style="left:682px;top:924px;width:304px;height:4px;background:#0a7aff"></div>
<div class="a" style="left:707px;top:879px;font-size:33px;line-height:44px;color:#1f1f1f;white-space:nowrap;letter-spacing:0.3px">README.md</div>
<svg class="a" style="left:930px;top:891px" width="20" height="20" viewBox="0 0 20 20" stroke="#777" stroke-width="1.7"><path d="M3,3 L17,17 M17,3 L3,17"/></svg>
<svg class="a" style="left:1013px;top:890px" width="26" height="26" viewBox="0 0 26 26" stroke="#0a72f0" stroke-width="3"><path d="M13,2 V24 M2,13 H24"/></svg>
</body></html>
